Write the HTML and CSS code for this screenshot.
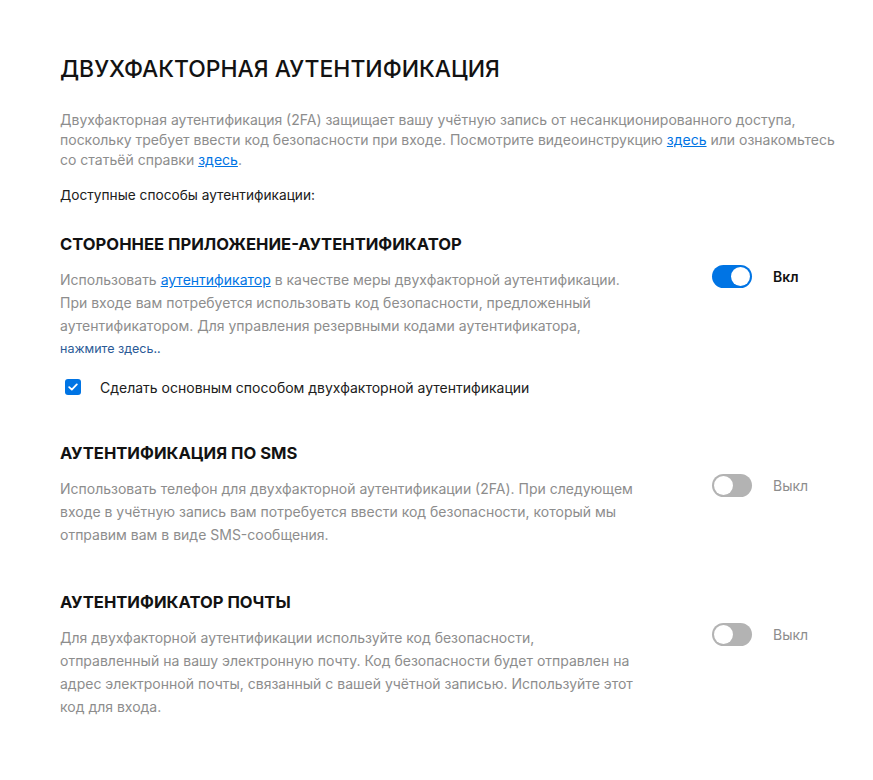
FILE: index.html
```html
<!DOCTYPE html>
<html lang="ru">
<head>
  <meta charset="UTF-8">
  <meta name="viewport" content="width=device-width, initial-scale=1.0">
  <title>Двухфакторная аутентификация</title>
  <link rel="stylesheet" href="styles.css">
</head>
<body>
  <div class="container">
    <h1 class="page-title">ДВУХФАКТОРНАЯ АУТЕНТИФИКАЦИЯ</h1>
    <p class="intro">
      Двухфакторная аутентификация (2FA) защищает вашу учётную запись от несанкционированного доступа,
      поскольку требует ввести код безопасности при входе. Посмотрите видеоинструкцию <a href="#">здесь</a> или ознакомьтесь
      со статьёй справки <a href="#">здесь</a>.
    </p>
    <p class="available">Доступные способы аутентификации:</p>

    <div class="method method-first">
      <h2>СТОРОННЕЕ ПРИЛОЖЕНИЕ-АУТЕНТИФИКАТОР</h2>
      <div class="method-row">
        <div class="method-text">
          <p>Использовать <a href="#">аутентификатор</a> в качестве меры двухфакторной аутентификации.
            При входе вам потребуется использовать код безопасности, предложенный
            аутентификатором. Для управления резервными кодами аутентификатора,</p>
          <a href="#" class="small-link">нажмите здесь..</a>
        </div>
        <div class="method-switch">
          <span class="toggle on"></span>
          <span class="switch-label on">Вкл</span>
        </div>
      </div>
      <label class="check-row">
        <span class="checkbox">
          <svg width="10" height="8" viewBox="0 0 10 8"><path d="M1.2 4.2 L3.8 6.6 L8.8 1.4" fill="none" stroke="#fff" stroke-width="1.8" stroke-linecap="round" stroke-linejoin="round"/></svg>
        </span>
        Сделать основным способом двухфакторной аутентификации
      </label>
    </div>

    <div class="method">
      <h2>АУТЕНТИФИКАЦИЯ ПО SMS</h2>
      <div class="method-row">
        <div class="method-text">
          <p>Использовать телефон для двухфакторной аутентификации (2FA). При следующем
            входе в учётную запись вам потребуется ввести код безопасности, который мы
            отправим вам в виде SMS-сообщения.</p>
        </div>
        <div class="method-switch">
          <span class="toggle"></span>
          <span class="switch-label">Выкл</span>
        </div>
      </div>
    </div>

    <div class="method">
      <h2>АУТЕНТИФИКАТОР ПОЧТЫ</h2>
      <div class="method-row">
        <div class="method-text">
          <p>Для двухфакторной аутентификации используйте код безопасности,
            отправленный на вашу электронную почту. Код безопасности будет отправлен на
            адрес электронной почты, связанный с вашей учётной записью. Используйте этот
            код для входа.</p>
        </div>
        <div class="method-switch">
          <span class="toggle"></span>
          <span class="switch-label">Выкл</span>
        </div>
      </div>
    </div>
  </div>
</body>
</html>
```

FILE: styles.css
```css
body {
  margin: 0;
  background-color: #fff;
  font-family: Inter, "Noto Sans", sans-serif;
  color: #202020;
}

.container {
  width: 760px;
  padding: 54px 0 40px 60px;
}

.page-title {
  margin: 0;
  font-size: 22.9px;
  line-height: 30px;
  font-weight: 500;
  color: #121212;
}

.intro {
  width: 785px;
  margin: 26px 0 0;
  font-size: 14px;
  line-height: 20px;
  color: #8d8d8d;
}

a {
  color: #0074e4;
  text-decoration: underline;
}

.available {
  margin: 15px 0 0;
  font-size: 13.7px;
  line-height: 20px;
  color: #202020;
}

.method {
  margin-top: 45px;
}

.method-first {
  margin-top: 28px;
}

.method h2 {
  margin: 0;
  font-size: 16.6px;
  line-height: 22px;
  font-weight: 700;
  color: #121212;
}

.method-row {
  display: flex;
  justify-content: space-between;
  margin-top: 13px;
}

.method-text {
  width: 574px;
}

.method-text p {
  margin: 0;
  font-size: 14px;
  line-height: 23px;
  color: #8d8d8d;
}

.small-link {
  display: block;
  font-size: 12.5px;
  line-height: 23px;
  color: #2a5a96;
  text-decoration: none;
}

.method-switch {
  width: 108px;
  display: flex;
  align-items: center;
  gap: 21px;
  height: 23px;
  margin-top: -3px;
}

.toggle {
  position: relative;
  width: 40px;
  height: 23px;
  border-radius: 12px;
  background-color: #b3b3b3;
  flex-shrink: 0;
}

.toggle::after {
  content: "";
  position: absolute;
  top: 2px;
  left: 2px;
  width: 19px;
  height: 19px;
  border-radius: 50%;
  background-color: #fff;
}

.toggle.on {
  background-color: #0074e4;
}

.toggle.on::after {
  left: 19px;
}

.switch-label {
  font-size: 14px;
  color: #8d8d8d;
}

.switch-label.on {
  font-weight: 600;
  color: #121212;
}

.check-row {
  display: flex;
  align-items: center;
  gap: 19px;
  margin: 17px 0 0 5px;
  height: 20px;
  font-size: 14px;
  color: #202020;
}

.checkbox {
  width: 16px;
  height: 16px;
  border-radius: 3px;
  background-color: #0074e4;
  display: flex;
  align-items: center;
  justify-content: center;
}
```
